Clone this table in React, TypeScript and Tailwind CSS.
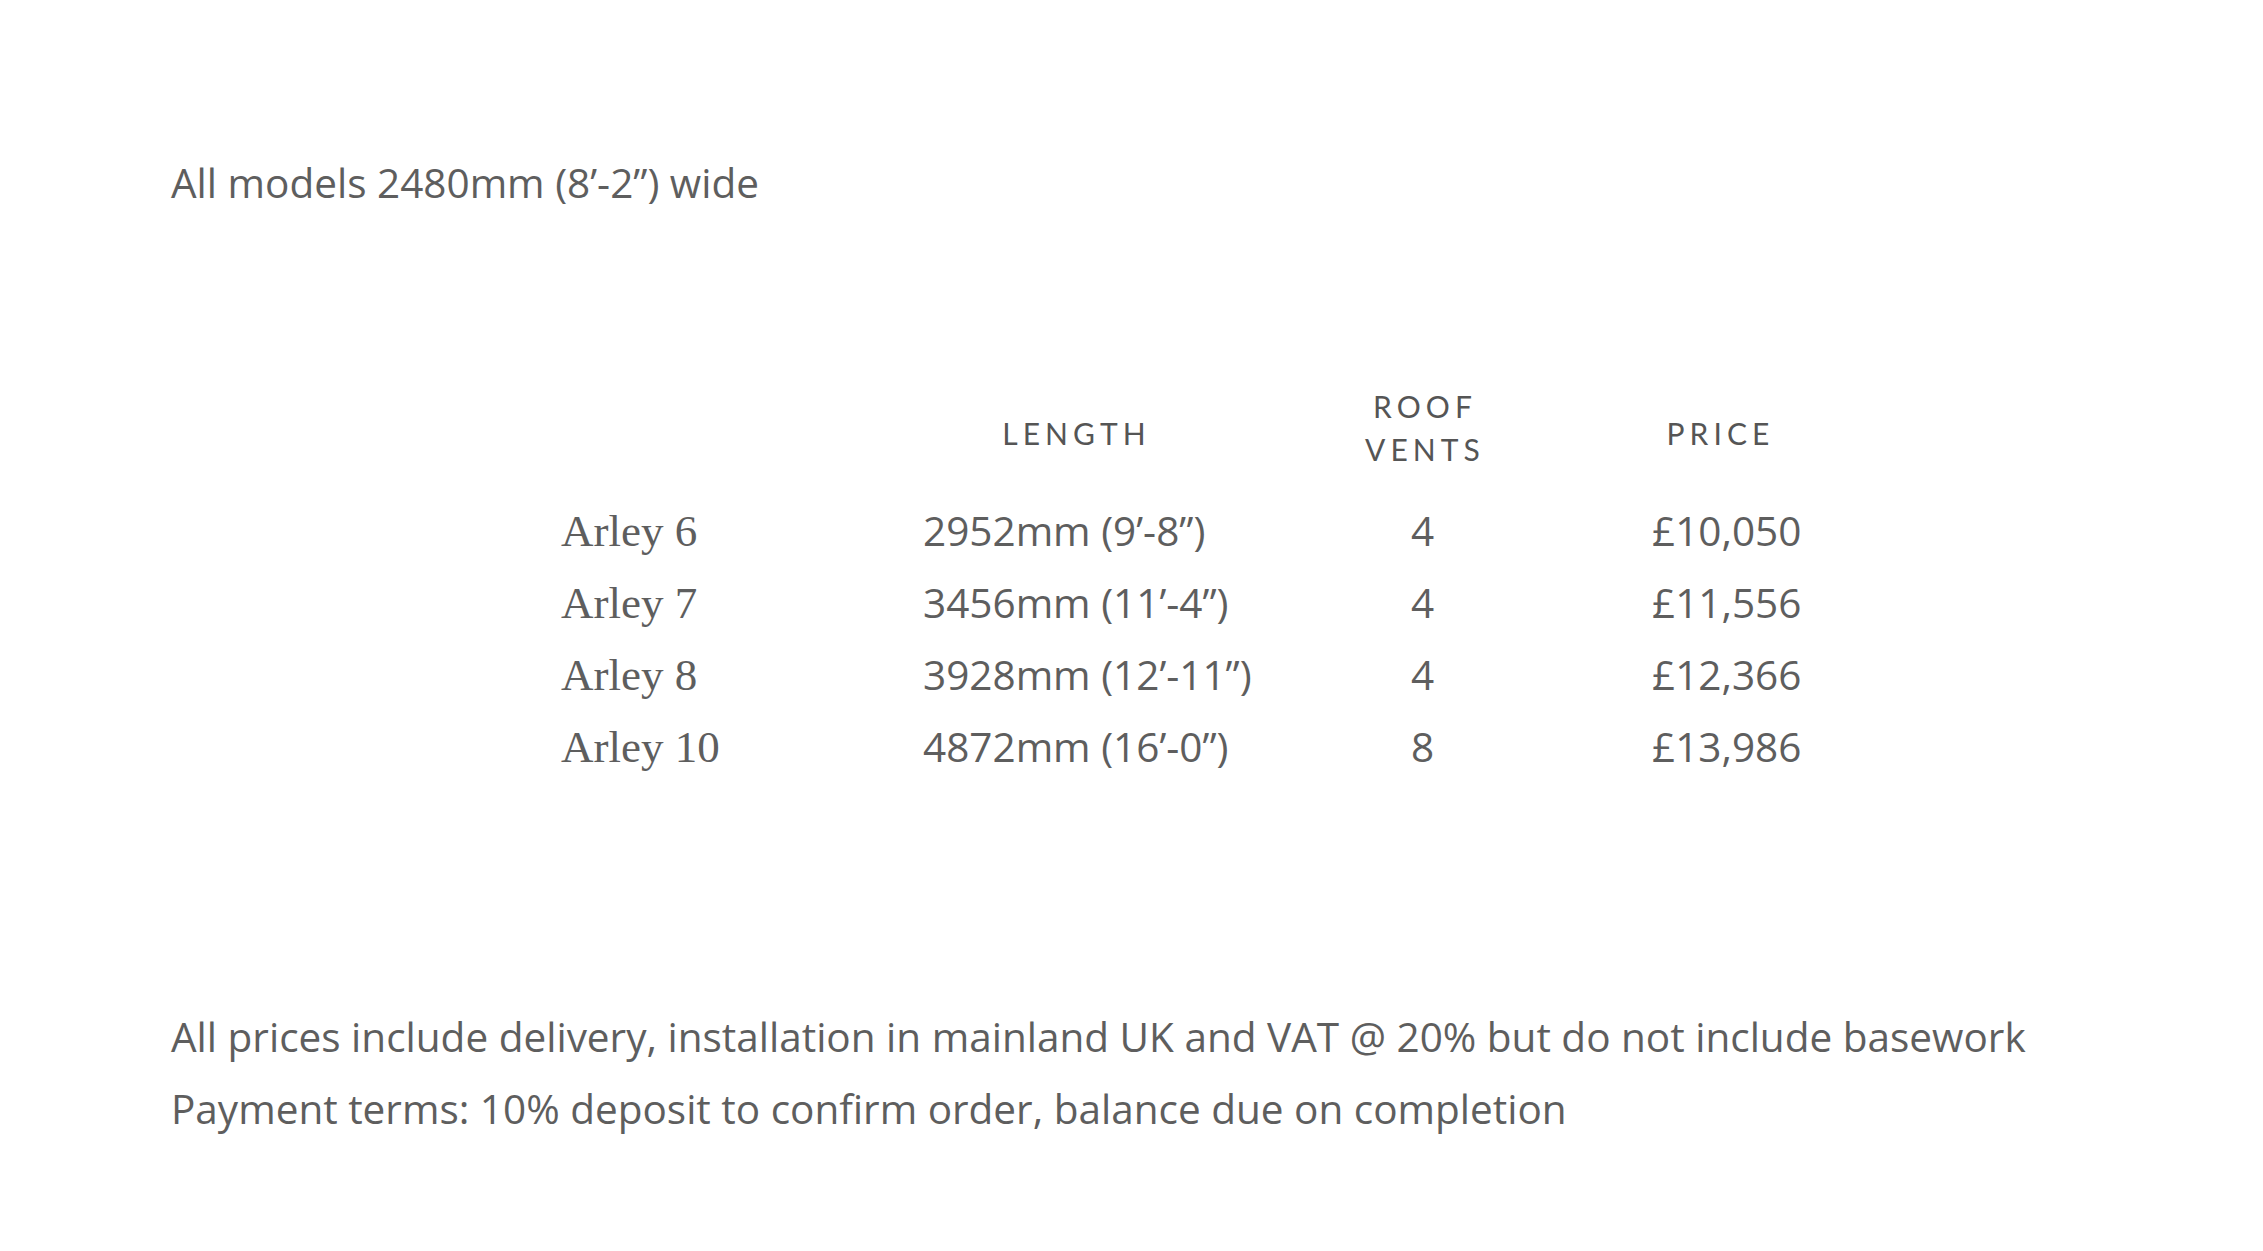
const models = [
  { name: 'Arley 6', length: '2952mm (9’-8”)', vents: '4', price: '£10,050' },
  { name: 'Arley 7', length: '3456mm (11’-4”)', vents: '4', price: '£11,556' },
  { name: 'Arley 8', length: '3928mm (12’-11”)', vents: '4', price: '£12,366' },
  { name: 'Arley 10', length: '4872mm (16’-0”)', vents: '8', price: '£13,986' },
]

const sans = "font-['Open_Sans',sans-serif] text-[40.5px] leading-[72px] whitespace-nowrap"
const head = "font-['Lato',sans-serif] text-[30px] leading-[43px] tracking-[0.17em] text-[#555555]"

export default function App() {
  return (
    <div className="min-h-[1251px] w-full bg-white pl-[171px] pt-[147px] text-[#5e5e5e]">
      {/* Width note */}
      <p className={sans}>All models 2480mm (8’-2”) wide</p>

      {/* Model table */}
      <div className="ml-[390px] mt-[171px] grid grid-cols-[362px_302px_395px_196px]">
        <div className="h-[86px]" />
        <div className={`${head} flex h-[86px] items-center justify-center pl-[5px]`}>LENGTH</div>
        <div className={`${head} flex h-[86px] flex-col items-center justify-center pb-[10px] pl-[5px] text-center`}>
          <span>ROOF</span>
          <span>VENTS</span>
        </div>
        <div className={`${head} flex h-[86px] items-center justify-center pl-[5px]`}>PRICE</div>

        <div className="col-span-4 h-[19px]" />

        {models.map((m) => (
          <div key={m.name} className="contents">
            <div className="whitespace-nowrap font-['Liberation_Serif',serif] text-[45px] leading-[72px]">{m.name}</div>
            <div className={sans}>{m.length}</div>
            <div className={`${sans} text-center`}>{m.vents}</div>
            <div className={`${sans} pl-[32px]`}>{m.price}</div>
          </div>
        ))}
      </div>

      {/* Terms */}
      <div className={`${sans} mt-[218px]`}>
        <p>All prices include delivery, installation in mainland UK and VAT @ 20% but do not include basework</p>
        <p>Payment terms: 10% deposit to confirm order, balance due on completion</p>
      </div>
    </div>
  )
}
